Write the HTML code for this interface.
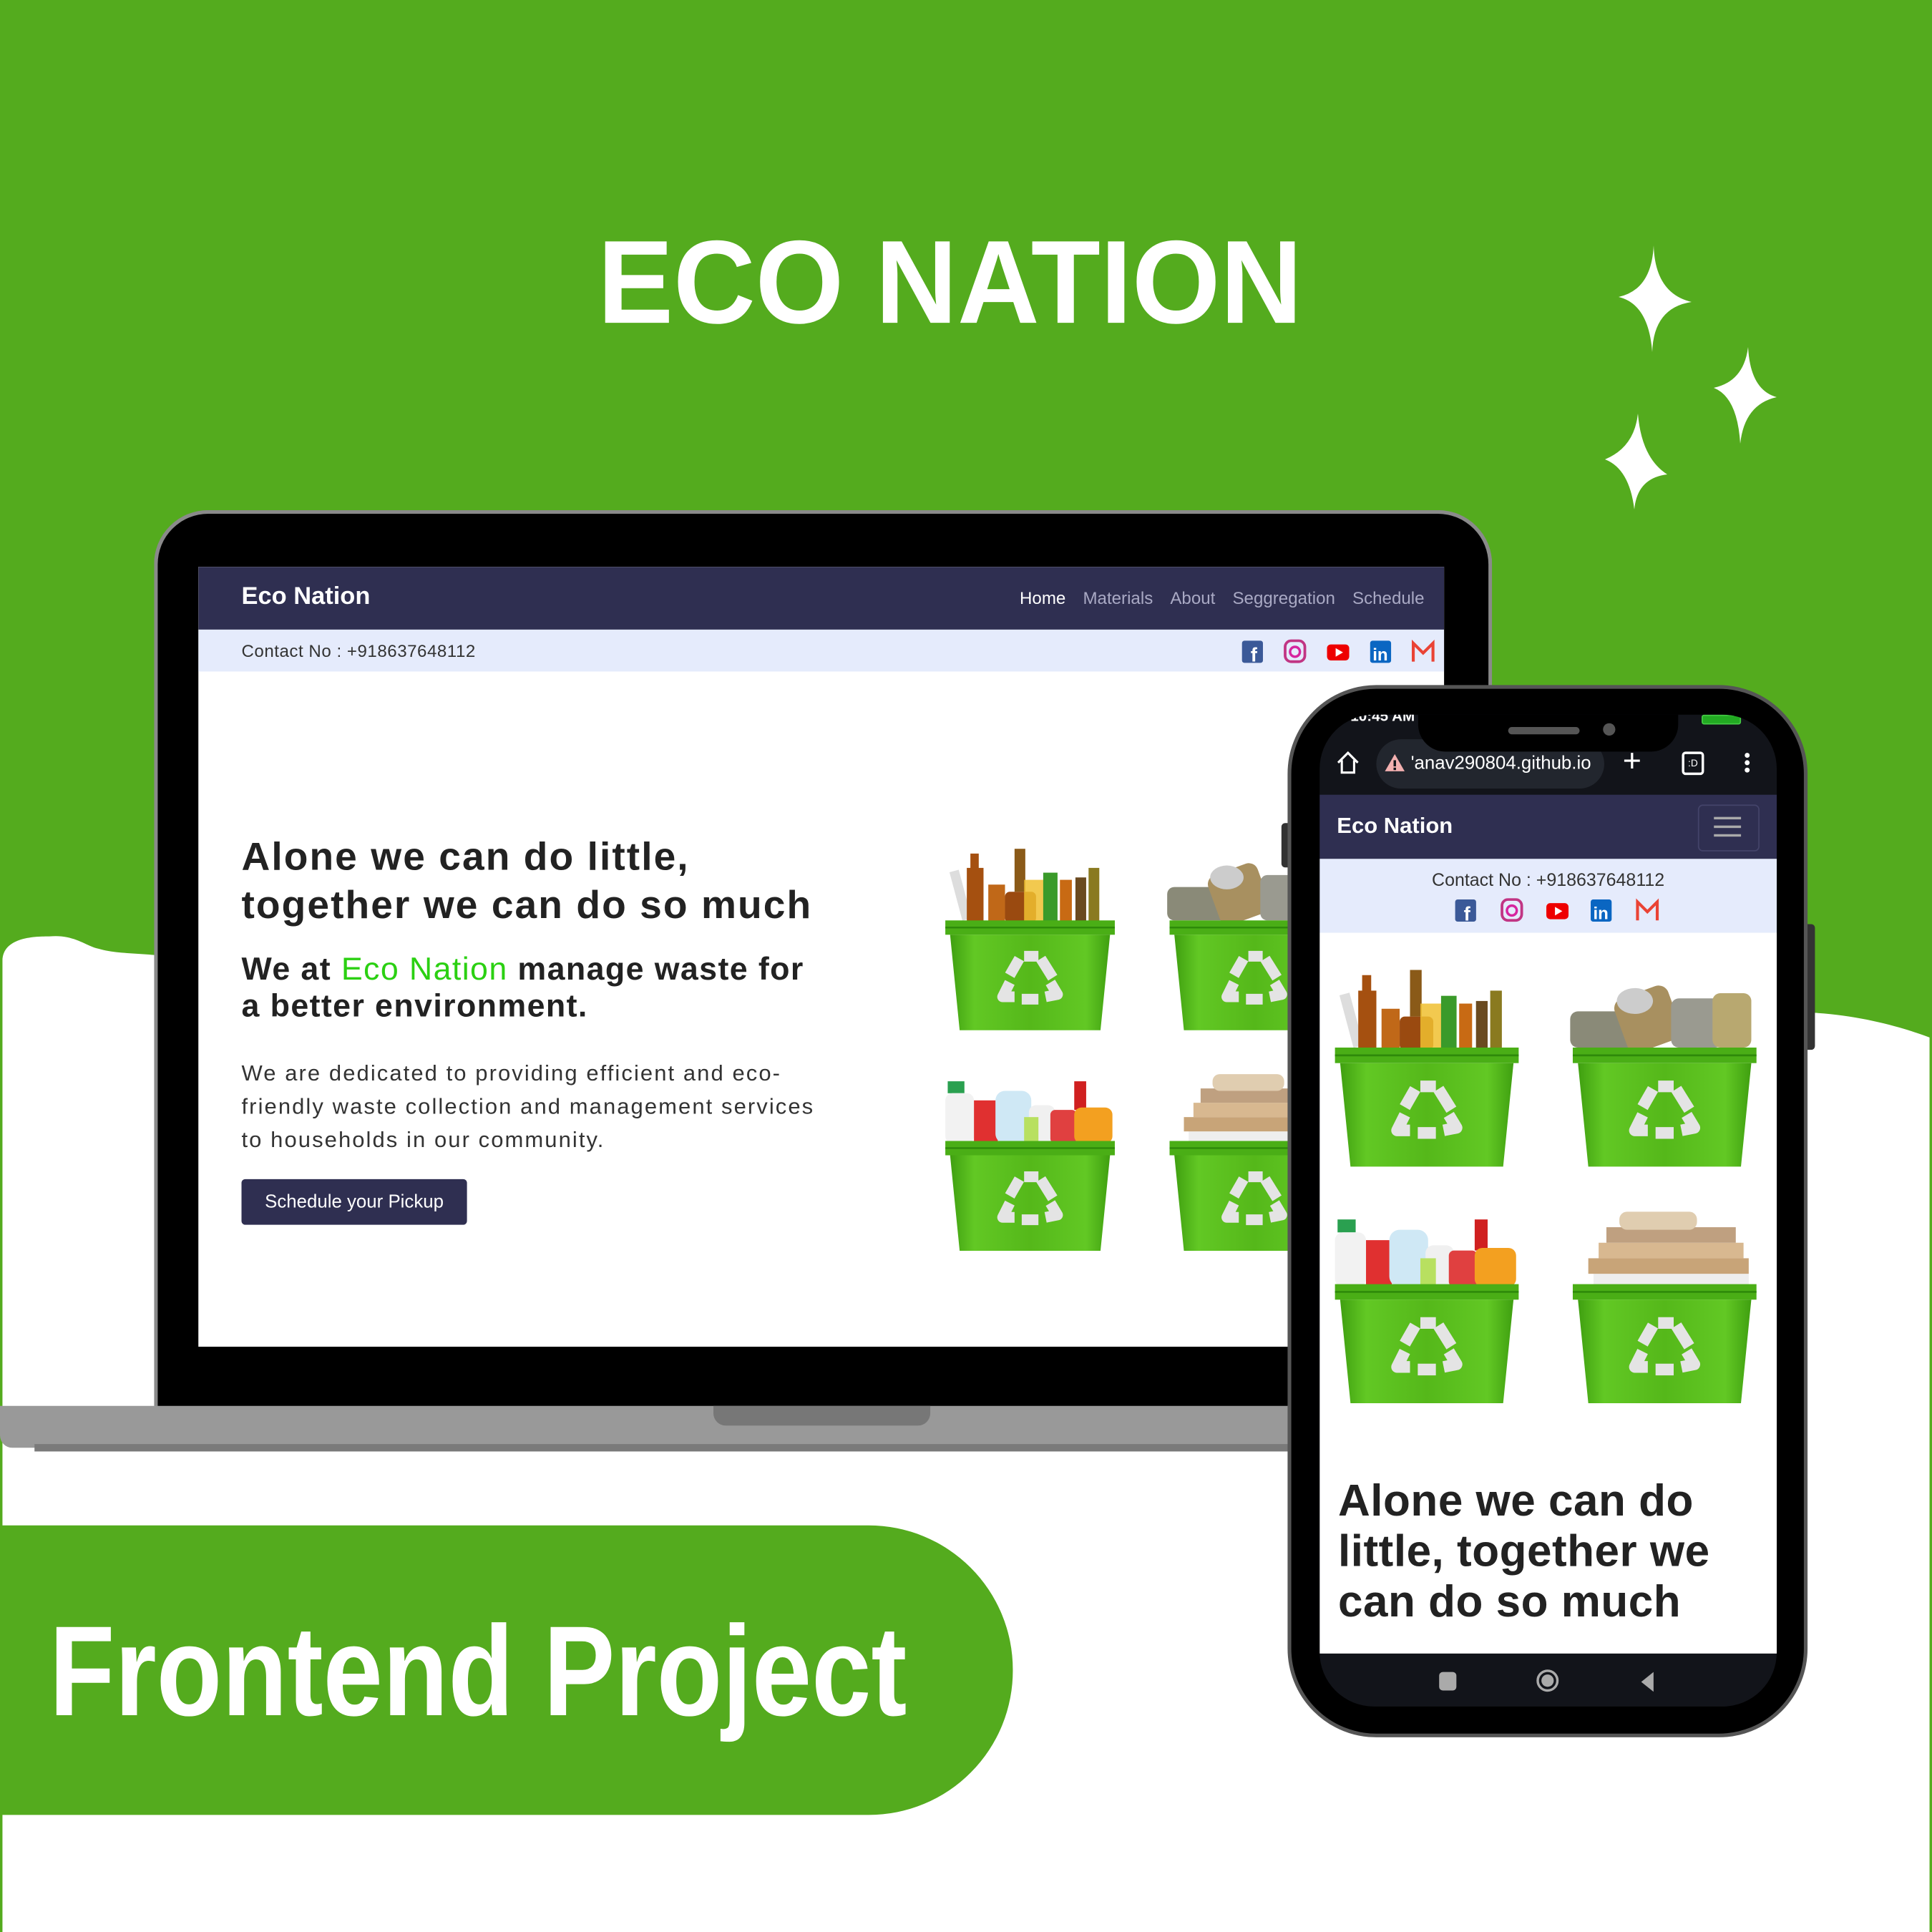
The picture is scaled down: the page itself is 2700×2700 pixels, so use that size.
<!DOCTYPE html>
<html><head><meta charset="utf-8"><style>
html,body{margin:0;padding:0;}
body{width:2700px;height:2700px;overflow:hidden;background:#54ab1e;position:relative;font-family:"Liberation Sans",sans-serif;}
#c{position:absolute;left:0;top:0;width:1568px;height:1568px;transform:scale(1.721939);transform-origin:0 0;}
.a{position:absolute;}
.nav a{color:#a9a9c4;margin-left:14px;}
</style></head><body>
<svg width="0" height="0" style="position:absolute">
<defs>
<linearGradient id="bg" x1="0" x2="1"><stop offset="0" stop-color="#3f9f10"/><stop offset=".15" stop-color="#62c824"/><stop offset=".5" stop-color="#55b81a"/><stop offset=".85" stop-color="#62c824"/><stop offset="1" stop-color="#3f9f10"/></linearGradient>
<symbol id="bin" viewBox="0 0 150 160">
<rect x="4" y="64" width="142" height="12" fill="#4aae16"/>
<path d="M8 76H142L134 156H16Z" fill="url(#bg)"/>
<line x1="4" y1="70" x2="146" y2="70" stroke="#2e8a0a" stroke-width="1.5"/>
<g fill="none" stroke="#e4e4e4" stroke-width="9" stroke-linejoin="round">
<path d="M66 96 L58 110"/><path d="M84 96 L94 112"/><path d="M62 128 L52 128 L58 116"/><path d="M88 128 L98 126 L92 116"/><path d="M70 94 L82 94"/><path d="M68 130 L82 130"/>
</g>
</symbol>
<symbol id="glass" viewBox="0 0 150 160">
<rect x="12" y="22" width="8" height="42" fill="#ddd" transform="rotate(-15 16 40)"/>
<rect x="22" y="20" width="14" height="46" fill="#a55010"/><rect x="25" y="8" width="7" height="14" fill="#a55010"/>
<rect x="40" y="34" width="14" height="32" fill="#c06818"/>
<rect x="54" y="40" width="26" height="26" fill="#9a4a10" rx="4"/>
<rect x="62" y="4" width="9" height="36" fill="#8a5a18"/>
<rect x="70" y="30" width="20" height="36" fill="#f0c030" opacity=".85"/>
<rect x="86" y="24" width="12" height="42" fill="#3a9a2a"/>
<rect x="100" y="30" width="10" height="36" fill="#c86a14"/>
<rect x="113" y="28" width="9" height="38" fill="#6a4a20"/>
<rect x="124" y="20" width="9" height="46" fill="#8a7a20"/>
</symbol>
<symbol id="cans" viewBox="0 0 150 160">
<rect x="2" y="36" width="52" height="28" fill="#8a8a78" rx="6"/>
<rect x="40" y="20" width="44" height="44" fill="#a89060" rx="8" transform="rotate(-20 62 42)"/>
<ellipse cx="52" cy="28" rx="14" ry="10" fill="#ccc"/>
<rect x="80" y="26" width="40" height="38" fill="#9a9a90" rx="6"/>
<rect x="112" y="22" width="30" height="42" fill="#b8a870" rx="6"/>
</symbol>
<symbol id="plast" viewBox="0 0 150 160">
<rect x="6" y="14" width="14" height="10" fill="#2aa050"/>
<rect x="4" y="24" width="24" height="42" fill="#f2f2f2" rx="6"/>
<rect x="28" y="30" width="20" height="36" fill="#e03030"/>
<rect x="46" y="22" width="30" height="44" fill="#cfe8f5" rx="8"/>
<rect x="74" y="34" width="22" height="32" fill="#f0f0f0" rx="6"/>
<rect x="92" y="38" width="22" height="28" fill="#e04040" rx="4"/>
<rect x="112" y="14" width="10" height="24" fill="#d02020"/>
<rect x="112" y="36" width="32" height="30" fill="#f3a020" rx="6"/>
<rect x="70" y="44" width="12" height="22" fill="#b8e060"/>
</symbol>
<symbol id="paper" viewBox="0 0 150 160">
<rect x="20" y="56" width="120" height="10" fill="#eee"/>
<rect x="16" y="44" width="124" height="12" fill="#c8a478"/>
<rect x="24" y="32" width="112" height="12" fill="#d8b890"/>
<rect x="30" y="20" width="100" height="12" fill="#bfa080"/>
<rect x="40" y="8" width="60" height="14" fill="#e0cdb0" rx="6"/>
</symbol>
</defs></svg>

<svg class="a" style="left:0;top:0" width="2700" height="2700" viewBox="0 0 1568 1568">
<path d="M2 780 C2 760 30 760 40 760 C60 758 70 768 80 770 C100 776 130 772 145 780 L1400 780 L1472 822 C1510 824 1545 834 1566 842 L1566 1568 L2 1568 Z" fill="#fff"/>
<path d="M0 1238 H705 A117 117 0 0 1 822 1355 A117 117 0 0 1 705 1473 H0 Z" fill="#54ab1e"/>
<text x="485" y="262" font-family="Liberation Sans" font-weight="bold" font-size="96" fill="#fff" textLength="572" lengthAdjust="spacingAndGlyphs">ECO NATION</text>
<text x="40" y="1392" font-family="Liberation Sans" font-weight="bold" font-size="104" fill="#fff" textLength="696" lengthAdjust="spacingAndGlyphs">Frontend Project</text>
</svg>
<svg class="a" style="left:0;top:0" width="2700" height="2700">
<path d="M2311 343 Q2313 410 2364 422 Q2311 430 2309 492 Q2304 425 2262 415 Q2308 405 2311 343Z" fill="#fff"/>
<path d="M2443 485 Q2446 545 2483 555 Q2438 565 2432 620 Q2428 555 2395 542 Q2437 533 2443 485Z" fill="#fff"/>
<path d="M2289 578 Q2294 640 2330 663 Q2288 668 2284 712 Q2277 655 2243 642 Q2284 625 2289 578Z" fill="#fff"/>
</svg>

<div id="c">
<div class="a" style="left:125px;top:414px;width:1080px;height:730px;background:#000;border:3px solid #8a8a8a;border-bottom:none;border-radius:44px 44px 0 0;"></div>
<div class="a" style="left:0;top:1141px;width:1100px;height:34px;background:#999;border-radius:0 0 0 10px;"></div>
<div class="a" style="left:28px;top:1172px;width:1070px;height:6px;background:#7a7a7a;"></div>
<div class="a" style="left:579px;top:1141px;width:176px;height:16px;background:#777;border-radius:0 0 10px 10px;"></div>
<div class="a" style="left:161px;top:460px;width:1011px;height:633px;background:#fff;overflow:hidden;">
 <div class="a" style="left:0;top:0;width:1011px;height:51px;background:#2f2f51;"></div>
 <div class="a" style="left:35px;top:13px;color:#fff;font-weight:bold;font-size:20px;">Eco Nation</div>
 <div class="a nav" style="right:16px;top:17px;font-size:14px;"><a style="color:#fff">Home</a><a>Materials</a><a>About</a><a>Seggregation</a><a>Schedule</a></div>
 <div class="a" style="left:0;top:51px;width:1011px;height:34px;background:#e5ebfc;"></div>
 <div class="a" style="left:35px;top:60px;font-size:14px;color:#333;letter-spacing:.3px;">Contact No : +918637648112</div>
 <div class="a" style="left:35px;top:216px;font-size:32px;font-weight:bold;color:#222;line-height:39px;letter-spacing:1.2px;">Alone we can do little,<br>together we can do so much</div>
 <div class="a" style="left:35px;top:311px;font-size:26px;font-weight:bold;color:#222;line-height:30px;letter-spacing:.8px;">We at <span style="color:#2bd012;font-weight:normal">Eco Nation</span> manage waste for<br>a better environment.</div>
 <div class="a" style="left:35px;top:398px;font-size:18px;color:#333;line-height:27px;width:560px;letter-spacing:1.2px;">We are dedicated to providing efficient and eco-<br>friendly waste collection and management services<br>to households in our community.</div>
 <div class="a" style="left:35px;top:497px;width:183px;height:37px;background:#2f2f51;border-radius:3px;color:#fff;font-size:15px;line-height:37px;text-align:center;">Schedule your Pickup</div>
 <svg class="a" style="left:602px;top:225px" width="146" height="155"><use href="#glass"/><use href="#bin"/></svg>
 <svg class="a" style="left:784px;top:225px" width="146" height="155"><use href="#cans"/><use href="#bin"/></svg>
 <svg class="a" style="left:602px;top:404px" width="146" height="155"><use href="#plast"/><use href="#bin"/></svg>
 <svg class="a" style="left:784px;top:404px" width="146" height="155"><use href="#paper"/><use href="#bin"/></svg>
</div>
<svg class="a" style="left:1005px;top:519px" width="170" height="20">
 <rect x="3" y="1" width="17" height="18" rx="2" fill="#3b5998"/><text x="10" y="18" font-size="16" font-weight="bold" fill="#fff" font-family="Liberation Sans">f</text>
 <rect x="38" y="1" width="16" height="17" rx="5" fill="none" stroke="#c13584" stroke-width="2.2"/><circle cx="46" cy="10" r="4" fill="none" stroke="#d6249f" stroke-width="2"/>
 <rect x="72" y="4" width="18" height="13" rx="3" fill="#e00"/><path d="M79 7 L85 10.5 L79 14Z" fill="#fff"/>
 <rect x="107" y="1" width="17" height="18" rx="2" fill="#0a66c2"/><text x="109" y="17" font-size="14" font-weight="bold" fill="#fff" font-family="Liberation Sans">in</text>
 <path d="M142 18 V3 L150 11 L158 3 V18" fill="none" stroke="#ea4335" stroke-width="2.4"/>
</svg>
<div class="a" style="left:1040px;top:668px;width:8px;height:36px;background:#333;border-radius:3px;"></div>
<div class="a" style="left:1464px;top:750px;width:9px;height:102px;background:#333;border-radius:3px;"></div>
<div class="a" style="left:1045px;top:556px;width:416px;height:848px;background:#000;border:3px solid #555;border-radius:72px;"></div>
<div class="a" style="left:1071px;top:580px;width:371px;height:805px;background:#12141a;border-radius:44px;overflow:hidden;">
 <div class="a" style="left:25px;top:-6px;color:#fff;font-size:12px;font-weight:bold;">10:45 AM</div>
 <div class="a" style="left:310px;top:0px;width:30px;height:6px;border:1px solid #4c4;border-radius:2px;background:#2a2;"></div>
 <div class="a" style="left:46px;top:20px;width:185px;height:40px;background:#22262e;border-radius:20px;"></div>
 <svg class="a" style="left:12px;top:28px" width="22" height="22"><path d="M3 11 L11 3 L19 11 M6 9 V19 H16 V9" fill="none" stroke="#fff" stroke-width="1.8"/></svg>
 <svg class="a" style="left:52px;top:31px" width="18" height="16"><path d="M9 1 L17 15 H1Z" fill="#f3b0b0"/><rect x="8" y="6" width="2" height="5" fill="#12141a"/><rect x="8" y="12" width="2" height="2" fill="#12141a"/></svg>
 <div class="a" style="left:74px;top:31px;color:#fff;font-size:15px;">'anav290804.github.io</div>
 <div class="a" style="left:246px;top:24px;color:#fff;font-size:26px;line-height:26px;">+</div>
 <div class="a" style="left:294px;top:30px;width:14px;height:15px;border:2px solid #fff;border-radius:3px;color:#fff;font-size:8px;text-align:center;line-height:15px;">:D</div>
 <div class="a" style="left:345px;top:31px;width:4px;height:4px;background:#fff;border-radius:2px;box-shadow:0 6px 0 #fff,0 12px 0 #fff;"></div>
 <div class="a" style="left:80px;top:-10px;width:211px;height:40px;background:#000;border-radius:0 0 22px 22px;"></div>
 <div class="a" style="left:153px;top:10px;width:58px;height:6px;background:#555;border-radius:3px;"></div>
 <div class="a" style="left:230px;top:7px;width:10px;height:10px;background:#555;border-radius:5px;"></div>
 <div class="a" style="left:0;top:65px;width:371px;height:52px;background:#2f2f51;"></div>
 <div class="a" style="left:14px;top:80px;color:#fff;font-weight:bold;font-size:18px;">Eco Nation</div>
 <div class="a" style="left:307px;top:73px;width:48px;height:36px;border:1px solid #44446a;border-radius:4px;"></div>
 <div class="a" style="left:320px;top:83px;width:22px;height:2px;background:#aaa;box-shadow:0 7px 0 #aaa,0 14px 0 #aaa;"></div>
 <div class="a" style="left:0;top:117px;width:371px;height:60px;background:#e5ebfc;"></div>
 <div class="a" style="left:0;top:127px;width:371px;text-align:center;font-size:14.5px;color:#333;">Contact No : +918637648112</div>
 <div class="a" style="left:0;top:177px;width:371px;height:585px;background:#fff;"></div>
 <svg class="a" style="left:8px;top:203px" width="158" height="168"><use href="#glass"/><use href="#bin"/></svg>
 <svg class="a" style="left:201px;top:203px" width="158" height="168"><use href="#cans"/><use href="#bin"/></svg>
 <svg class="a" style="left:8px;top:395px" width="158" height="168"><use href="#plast"/><use href="#bin"/></svg>
 <svg class="a" style="left:201px;top:395px" width="158" height="168"><use href="#paper"/><use href="#bin"/></svg>
 <div class="a" style="left:15px;top:617px;font-size:36px;font-weight:bold;color:#222;line-height:41px;letter-spacing:.3px;">Alone we can do<br>little, together we<br>can do so much</div>
 <div class="a" style="left:97px;top:777px;width:14px;height:15px;background:#aaa;border-radius:3px;"></div>
 <div class="a" style="left:176px;top:775px;width:14px;height:14px;border:2px solid #aaa;border-radius:50%;"></div>
 <div class="a" style="left:180px;top:779px;width:10px;height:10px;background:#aaa;border-radius:50%;"></div>
 <svg class="a" style="left:259px;top:776px" width="14" height="18"><path d="M12 1 V17 L2 9Z" fill="#aaa"/></svg>
</div>
<svg class="a" style="left:1178px;top:729px" width="170" height="20">
 <rect x="3" y="1" width="17" height="18" rx="2" fill="#3b5998"/><text x="10" y="18" font-size="16" font-weight="bold" fill="#fff" font-family="Liberation Sans">f</text>
 <rect x="41" y="1" width="16" height="17" rx="5" fill="none" stroke="#c13584" stroke-width="2.2"/><circle cx="49" cy="10" r="4" fill="none" stroke="#d6249f" stroke-width="2"/>
 <rect x="77" y="4" width="18" height="13" rx="3" fill="#e00"/><path d="M84 7 L90 10.5 L84 14Z" fill="#fff"/>
 <rect x="113" y="1" width="17" height="18" rx="2" fill="#0a66c2"/><text x="115" y="17" font-size="14" font-weight="bold" fill="#fff" font-family="Liberation Sans">in</text>
 <path d="M151 18 V3 L159 11 L167 3 V18" fill="none" stroke="#ea4335" stroke-width="2.4"/>
</svg>
</div>
</body></html>
